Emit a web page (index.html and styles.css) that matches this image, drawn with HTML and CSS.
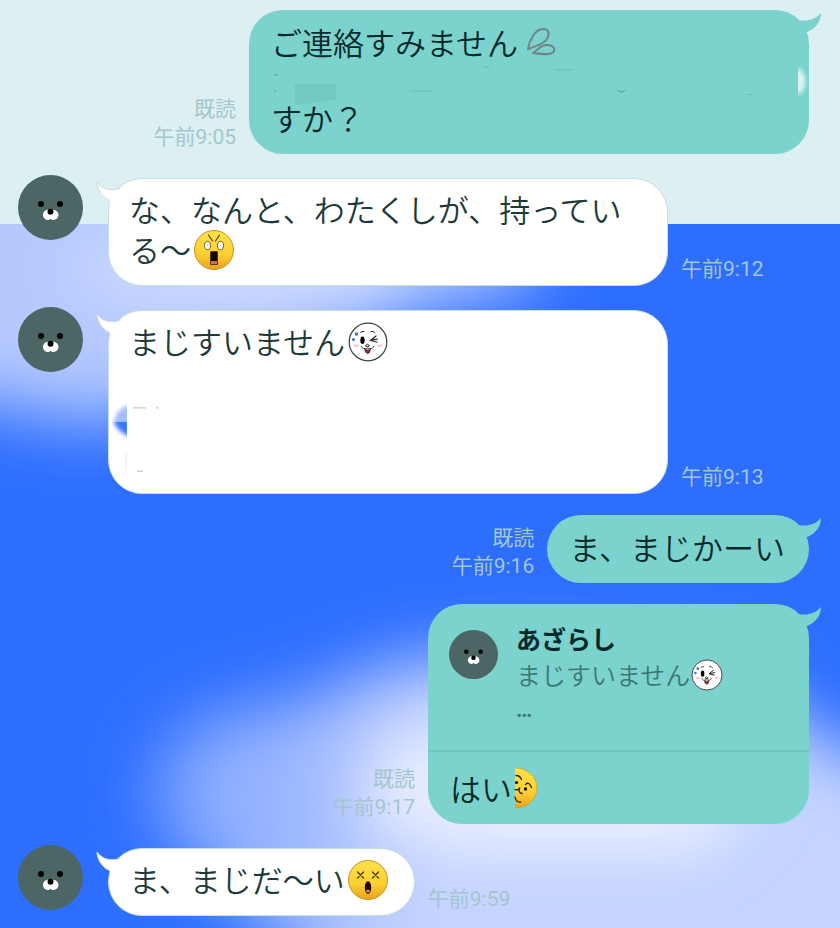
FILE: index.html
```html
<!DOCTYPE html>
<html lang="ja">
<head>
<meta charset="utf-8">
<meta name="viewport" content="width=device-width, initial-scale=1">
<title>トーク</title>
<link rel="stylesheet" href="styles.css">
</head>
<body>
<svg class="defs" aria-hidden="true">
  <defs>
    <linearGradient id="gold" x1="0" y1="0" x2="0" y2="1">
      <stop offset="0" stop-color="#ffe14a"/><stop offset=".6" stop-color="#fbd033"/><stop offset="1" stop-color="#eaa21c"/>
    </linearGradient>
    <symbol id="seal" viewBox="0 0 65 65">
      <circle cx="32.500" cy="32.500" r="32.500" fill="#4b6664"/>
      <circle cx="23" cy="29" r="3" fill="#000"/><circle cx="42" cy="29" r="3" fill="#000"/>
      <path d="M32.500 35C28 34 25 36.500 25 40C25 44 29.500 46 32.500 44.500C35.500 46 40.500 44 40.500 40C40.500 36.500 37 34 32.500 35Z" fill="#fff"/>
      <circle cx="32.500" cy="36.800" r="3" fill="#000"/>
      <circle cx="32.500" cy="44.500" r=".8" fill="#4b6664"/>
    </symbol>
    <symbol id="tail-out" viewBox="0 0 30 24">
      <path d="M5 8C14 9.500 22 8 28 1C28 10 22 17 14 20L4 20Z" fill="#7cd3cd"/>
    </symbol>
    <symbol id="tail-in" viewBox="0 0 30 24">
      <path d="M26 7C16 10 8 9 2 1C2 9 8 17 14.500 19.500L15 24L26 20Z" fill="#fff"/>
      <path d="M25 7.500C16 10 8 9 2 1C2 9 8 17 14.500 19.500" fill="none" stroke="#c8dedd"/>
    </symbol>
    <symbol id="drops" viewBox="0 0 30 30">
      <g fill="none" stroke="#6f8486" stroke-width="2" stroke-linejoin="round">
        <path d="M2 22C3 14 9 2 17 2C23 2 24 7 21 12C17 18 9 19 2 22Z"/>
        <path d="M7 26C12 23 14 18 21 18C27 18 29 21 28 24C26 29 15 27 7 26Z"/>
      </g>
    </symbol>
    <symbol id="shock" viewBox="0 0 40 40">
      <circle cx="20" cy="20" r="19.500" fill="url(#gold)" stroke="#c98f22"/>
      <path d="M14.500 5l4 6M25.500 5l-4 6" stroke="#5b4310" stroke-width="1.200" stroke-linecap="round"/>
      <ellipse cx="13.500" cy="15.500" rx="3" ry="4.200" fill="#fff" stroke="#654c12" stroke-width=".9"/>
      <ellipse cx="26.500" cy="15.500" rx="3" ry="4.200" fill="#fff" stroke="#654c12" stroke-width=".9"/>
      <circle cx="13.500" cy="15.500" r=".8" fill="#c9c9c9"/><circle cx="26.500" cy="15.500" r=".8" fill="#c9c9c9"/>
      <path d="M16.500 21.500h7v13h-7z" fill="#0d0502" stroke="#5b2d0a" stroke-width=".8"/>
      <path d="M17 31h6v3h-6z" fill="#d66969"/>
    </symbol>
    <symbol id="dizzy" viewBox="0 0 40 40">
      <circle cx="20" cy="20" r="19.500" fill="url(#gold)" stroke="#c98f22"/>
      <path d="M9.500 12l6 6M15.500 12l-6 6M24.500 12l6 6M30.500 12l-6 6" stroke="#49350b" stroke-width="1.200" stroke-linecap="round"/>
      <ellipse cx="20" cy="27.500" rx="3.200" ry="6.300" fill="#160303"/>
      <path d="M18 31C19 29 21 29 22 31C21.500 33 18.500 33 18 31Z" fill="#e87a85"/>
    </symbol>
    <symbol id="wink" viewBox="0 0 40 40">
      <circle cx="20" cy="20" r="18.800" fill="#fff" stroke="#3b4140" stroke-width="1.200"/>
      <path d="M12.500 10.500Q14 9 16 9.500M23 9.500Q25.500 8.500 27 11" fill="none" stroke="#222" stroke-linecap="round"/>
      <ellipse cx="14.500" cy="18.300" rx="2.200" ry="3.800" fill="#080808"/>
      <path d="M28 14L22.500 18.500L29 20M29.500 17L23.500 18.200" fill="none" stroke="#222" stroke-width="1.200" stroke-linecap="round"/>
      <path d="M17.500 24Q19.500 20.500 21.500 24Q20 25 17.500 24" fill="none" stroke="#222"/>
      <path d="M13 24Q15 28 19.500 26Q24 28 26 24" fill="none" stroke="#333"/>
      <path d="M16.500 27Q20 29 22.500 27Q22 32 19.500 31.500Q17 31 16.500 27Z" fill="#942f38" stroke="#33191b" stroke-width=".6"/>
      <ellipse cx="8" cy="23.800" rx="2.800" ry="1.300" fill="#ffc3cc"/><ellipse cx="32" cy="23.800" rx="2.800" ry="1.300" fill="#ffc3cc"/>
      <circle cx="8.500" cy="12" r="1.700" fill="#376fd2"/><circle cx="5.500" cy="17.500" r="1.500" fill="#376fd2"/>
    </symbol>
    <symbol id="peek" viewBox="0 0 24 42">
      <path d="M1 1C13 1 23 9.500 23 21C23 32.500 13 41 1 41Z" fill="url(#gold)"/>
      <path d="M1 1C13 1 23 9.500 23 21C23 32.500 13 41 1 41" fill="none" stroke="#cda12b" stroke-width=".8"/>
      <g fill="none" stroke="#2a200a" stroke-width="1.300" stroke-linecap="round">
        <path d="M2 8.500Q6 8.500 7.500 12.500M11.500 17.500Q15 14 17.500 20.500"/>
        <path d="M1 22.500Q4 24 6 20.500Q3.500 25.500 8 26.500M1 30Q2 35.500 6.500 35"/>
      </g>
      <circle cx="2.500" cy="15.500" r="1.600" fill="#111"/><circle cx="11.500" cy="22" r="1.700" fill="#111"/>
    </symbol>
  </defs>
</svg>

<main class="chat">
  <svg class="wallpaper" viewBox="0 0 840 704" preserveAspectRatio="none" aria-hidden="true">
    <defs>
      <filter id="soft" x="-50%" y="-50%" width="200%" height="200%"><feGaussianBlur stdDeviation="34"/></filter>
      <filter id="mid" x="-50%" y="-50%" width="200%" height="200%"><feGaussianBlur stdDeviation="28"/></filter>
      <linearGradient id="glow" gradientUnits="userSpaceOnUse" x1="140" y1="0" x2="840" y2="0">
        <stop offset="0" stop-color="#7ea3ff"/><stop offset=".2" stop-color="#98b5ff"/><stop offset=".4" stop-color="#c6d4ff"/><stop offset="1" stop-color="#c4d4ff"/>
      </linearGradient>
    </defs>
    <rect width="840" height="704" fill="#2d6eff"/>
    <g filter="url(#soft)">
      <path d="M-100 -100H535V60C420 85 300 115 200 175C100 215 40 195 -100 155Z" fill="#b6c9ff"/>
      <path d="M155 580C150 505 220 480 300 480C360 445 420 430 520 430L720 440C790 490 840 530 940 570V820H350C290 700 170 650 155 580Z" fill="url(#glow)"/>
    </g>
    <g filter="url(#mid)">
      <ellipse cx="240" cy="45" rx="170" ry="36" fill="#cedbff"/>
      <path d="M390 520L600 480L760 570L700 630L460 630L360 590Z" fill="#e8edff"/>
    </g>
  </svg>

  <ol class="messages">
    <li class="row sent">
      <div class="bubble full">
        <svg class="tail"><use href="#tail-out"/></svg>
        <svg class="marks" viewBox="0 0 560 144" preserveAspectRatio="none" aria-hidden="true">
          <defs>
            <radialGradient id="pale" gradientUnits="userSpaceOnUse" cx="548" cy="71" r="11" gradientTransform="matrix(1 0 0 1.500 0 -35)">
              <stop offset=".5" stop-color="#dcf2f1"/><stop offset="1" stop-color="#7cd3cd"/>
            </radialGradient>
          </defs>
          <path d="M46 74h41v16l-41 5z" fill="#73c8c3"/>
          <path d="M549 52h10v40h-10z" fill="url(#pale)"/>
          <g fill="none" stroke="#4ea19c"><path d="M25 65h4M25 81h2M369 80q4 4 7 0"/><path d="M161 81h22M234 57h7M305 60h18M497 84q5 2 7-1" opacity=".4"/></g>
        </svg>
        <p>ご連絡すみません<svg class="emoji drops" role="img" aria-label="汗"><use href="#drops"/></svg></p>
        <p class="blank"></p>
        <p>すか？</p>
      </div>
      <div class="meta"><span>既読</span><time>午前9:05</time></div>
    </li>

    <li class="row received">
      <svg class="avatar"><use href="#seal"/></svg>
      <div class="bubble full">
        <svg class="tail"><use href="#tail-in"/></svg>
        <p>な、なんと、わたくしが、持っている〜<svg class="emoji" role="img" aria-label="驚き"><use href="#shock"/></svg></p>
      </div>
      <div class="meta"><time>午前9:12</time></div>
    </li>

    <li class="row received">
      <svg class="avatar"><use href="#seal"/></svg>
      <div class="bubble full tall">
        <svg class="tail"><use href="#tail-in"/></svg>
        <svg class="marks" viewBox="0 0 560 184" preserveAspectRatio="none" aria-hidden="true">
          <defs>
            <filter id="edge"><feGaussianBlur stdDeviation="2"/></filter>
            <clipPath id="upper"><path d="M0 80h18v32H0z"/></clipPath>
            <clipPath id="lower"><path d="M0 112h18v30H0z"/></clipPath>
          </defs>
          <g clip-path="url(#upper)"><path filter="url(#edge)" d="M24 94Q7 98 5 112V120H24Z" fill="#a3bbff"/></g>
          <g clip-path="url(#lower)"><path filter="url(#edge)" d="M5 104V112Q8 123 24 128V104Z" fill="#3977ff"/></g>
          <path d="M17 144v16" stroke="#dfe8ff"/>
          <path d="M24 98h13M47 98h3M28 162h6" fill="none" stroke="#b9bdbc"/>
        </svg>
        <p>まじすいません<svg class="emoji" role="img" aria-label="てへ"><use href="#wink"/></svg></p>
      </div>
      <div class="meta"><time>午前9:13</time></div>
    </li>

    <li class="row sent">
      <div class="bubble">
        <svg class="tail"><use href="#tail-out"/></svg>
        <p>ま、まじかーい</p>
      </div>
      <div class="meta"><span>既読</span><time>午前9:16</time></div>
    </li>

    <li class="row sent">
      <div class="bubble reply">
        <svg class="tail"><use href="#tail-out"/></svg>
        <blockquote class="quote">
          <svg class="avatar small"><use href="#seal"/></svg>
          <div>
            <strong>あざらし</strong>
            <p>まじすいません<svg class="emoji small" role="img" aria-label="てへ"><use href="#wink"/></svg></p>
            <p class="more">…</p>
          </div>
        </blockquote>
        <p class="answer">はい<svg class="emoji half" role="img" aria-label="のぞき"><use href="#peek"/></svg></p>
      </div>
      <div class="meta"><span>既読</span><time>午前9:17</time></div>
    </li>

    <li class="row received">
      <svg class="avatar"><use href="#seal"/></svg>
      <div class="bubble">
        <svg class="tail"><use href="#tail-in"/></svg>
        <p>ま、まじだ〜い<svg class="emoji" role="img" aria-label="びっくり"><use href="#dizzy"/></svg></p>
      </div>
      <div class="meta"><time>午前9:59</time></div>
    </li>
  </ol>
</main>
</body>
</html>
```
FILE: styles.css
```css
* { box-sizing: border-box; }

body {
  margin: 0;
  background: #dcf0f2;
  color: #062a2b;
  font-family: "Noto Sans CJK JP", sans-serif;
  font-weight: 350;
}

p, blockquote { margin: 0; }

.defs { position: absolute; width: 0; height: 0; }

.chat {
  position: relative;
  min-height: 100vh;
  overflow: hidden;
}

.wallpaper {
  position: absolute;
  top: 224px;
  left: 0;
  width: 100%;
  height: calc(100% - 224px);
}

.messages {
  position: relative;
  display: flex;
  flex-direction: column;
  gap: 21px;
  margin: 0;
  padding: 10px 31px 12px 18px;
  list-style: none;
}

.row { display: flex; }
.sent { flex-direction: row-reverse; }

.avatar {
  flex: none;
  width: 65px;
  height: 65px;
  margin-right: 25px;
}

.avatar.small {
  width: 49px;
  height: 49px;
  margin-right: 18px;
}

.bubble {
  position: relative;
  padding: 13px 24px 17px 22px;
  border-radius: 34px;
  background: #7cd3cd;
  font-size: 31px;
  line-height: 38px;
}

.bubble.full { flex: 0 1 560px; }
.bubble.tall { min-height: 184px; }

.received .bubble {
  margin-top: 3px;
  padding: 10px 23px 16px 20px;
  border: 1px solid #c8dedd;
  background: #fff;
  color: #1c3a3a;
  line-height: 40px;
}

.blank { height: 38px; }

.tail {
  position: absolute;
  top: 2px;
  right: -14px;
  width: 30px;
  height: 24px;
}

.received .tail {
  right: auto;
  left: -14px;
}

.marks {
  position: absolute;
  inset: 0;
  width: 100%;
  height: 100%;
}

.bubble > p { position: relative; }

.emoji {
  width: 40px;
  height: 40px;
  margin: -8px 3px;
}

.emoji.drops { width: 30px; height: 30px; margin: -2px 8px; }
.emoji.small { width: 32px; height: 32px; margin: -6px 1px; }
.emoji.half { width: 24px; height: 42px; margin: -8px 2px; }

.bubble.reply {
  flex: 0 1 381px;
  padding: 0;
}

.quote {
  display: flex;
  height: 148px;
  padding: 16px 21px;
  border-bottom: 2px solid #70c5bf;
  font-size: 25px;
  line-height: 36px;
  color: #3b7776;
}

.quote .avatar { margin-top: 10px; }

.quote strong {
  display: block;
  color: #062a2b;
  font-weight: 700;
}

.more {
  font-family: Roboto, sans-serif;
  font-size: 22px;
  font-weight: 700;
}

.answer { padding: 17px 22px; }

.meta {
  display: flex;
  flex-direction: column;
  align-self: flex-end;
  margin: 0 13px 3px;
  color: #a3c6cc;
  font-family: Roboto, "Noto Sans CJK JP", sans-serif;
  font-size: 21px;
  font-weight: 400;
  line-height: 28px;
  white-space: nowrap;
}

.sent .meta { align-items: flex-end; }
```
